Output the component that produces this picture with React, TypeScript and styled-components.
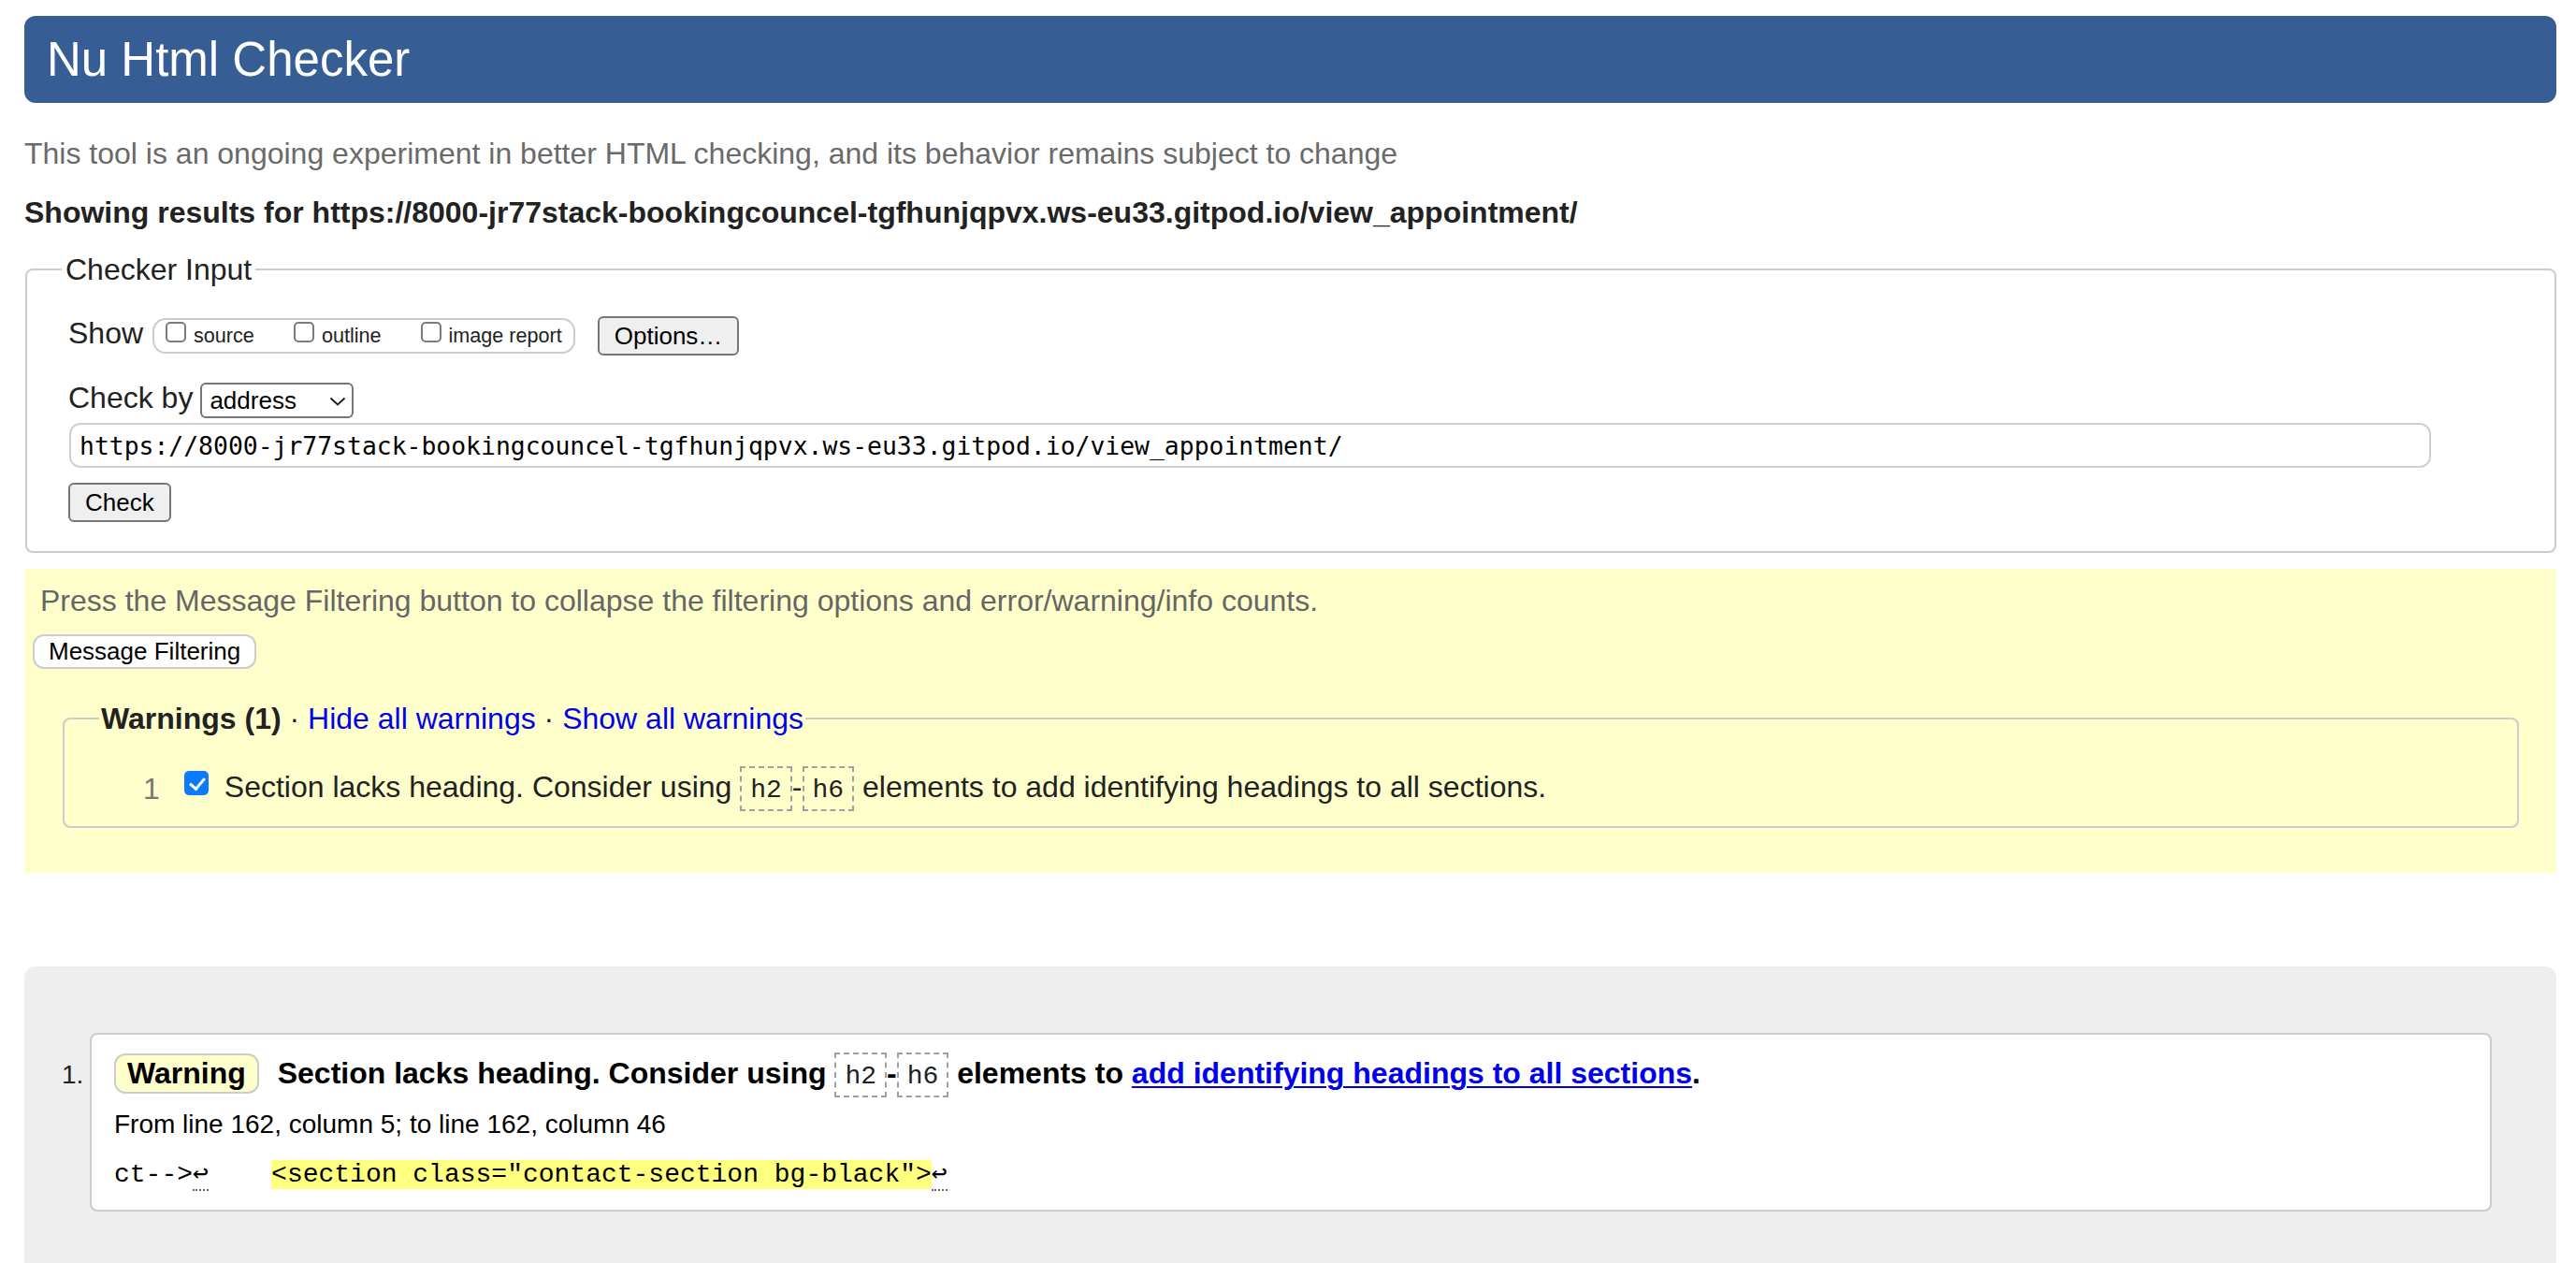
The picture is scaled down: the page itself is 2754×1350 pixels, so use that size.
import styled, { createGlobalStyle } from 'styled-components';

const SANS = '"Liberation Sans", Arial, Helvetica, sans-serif';
const MONO = '"Liberation Mono", "Courier New", monospace';

const checkUrl = 'https://8000-jr77stack-bookingcouncel-tgfhunjqpvx.ws-eu33.gitpod.io/view_appointment/';

const messages = [
  {
    type: 'Warning',
    from: 'From line 162, column 5; to line 162, column 46',
    before: 'ct-->',
    gap: '    ',
    extract: '<section class="contact-section bg-black">',
  },
];

const GlobalStyle = createGlobalStyle`
  html, body {
    margin: 0;
    background: #fff;
  }
  body {
    font-family: ${SANS};
    font-size: 32px;
    color: #222;
  }
  * {
    box-sizing: border-box;
  }
`;

const Page = styled.div`
  padding: 17px 21px 0 26px;
`;

const Header = styled.h1`
  margin: 0;
  height: 93px;
  display: flex;
  align-items: center;
  padding: 0 24px;
  background: #365d94;
  color: #fff;
  border-radius: 12px;
  font-size: 51px;
  font-weight: normal;
`;

const Intro = styled.p`
  margin: 35px 0 0;
  font-size: 32px;
  line-height: 38px;
  color: #6a6a6a;
`;

const ResultTitle = styled.h2`
  margin: 25px 0 0;
  font-size: 32px;
  line-height: 38px;
  font-weight: bold;
  color: #222;
`;

const Fieldset = styled.fieldset`
  margin: 23px 0 0 1px;
  min-inline-size: 0;
  border: 2px solid #cccccc;
  border-radius: 8px;
  padding: 0 0 31px 44px;
`;

const Legend = styled.legend`
  margin-left: -7px;
  padding: 0 4px;
  font-size: 32px;
  line-height: 38px;
  color: #222;
`;

const FormRow = styled.div<{ $top: number }>`
  display: flex;
  align-items: center;
  margin-top: ${(p) => p.$top}px;
`;

const FieldLabel = styled.span`
  font-size: 32px;
  line-height: 36px;
  margin: 0 8px 6px 0;
`;

const ShowGroup = styled.div`
  display: flex;
  align-items: center;
  gap: 42px;
  height: 38px;
  margin-left: 2px;
  padding: 0 12px;
  border: 2px solid #cccccc;
  border-radius: 14px;
`;

const ShowOption = styled.label`
  display: flex;
  align-items: center;
  font-size: 21.6px;
  line-height: 26px;
  color: #222;
`;

const Checkbox = styled.input.attrs({ type: 'checkbox' })<{ $size: number }>`
  appearance: none;
  position: relative;
  flex: none;
  margin: 0;
  width: ${(p) => p.$size}px;
  height: ${(p) => p.$size}px;
  border: 2px solid #7b7b7b;
  border-radius: 5px;
  background: #fff;

  &:checked {
    background: #0b7bfb;
    border-color: #0b7bfb;
  }

  &:checked::after {
    content: '';
    position: absolute;
    left: 7px;
    top: 2px;
    width: 7px;
    height: 13px;
    border: solid #fff;
    border-width: 0 3.5px 3.5px 0;
    transform: rotate(40deg);
  }
`;

const OptionBox = styled(Checkbox)`
  margin: 0 8px 8px 0;
`;

const Button = styled.button<{ $pill?: boolean }>`
  display: inline-flex;
  align-items: center;
  height: ${(p) => (p.$pill ? 37 : 42)}px;
  padding: 0 ${(p) => (p.$pill ? 15 : 16)}px;
  font-family: ${SANS};
  font-size: 26px;
  color: #000;
  background: ${(p) => (p.$pill ? '#fff' : '#efefef')};
  border: 2px solid ${(p) => (p.$pill ? '#cccccc' : '#767676')};
  border-radius: ${(p) => (p.$pill ? 12 : 6)}px;
`;

const OptionsButton = styled(Button)`
  margin-left: 24px;
`;

const SelectWrap = styled.span`
  position: relative;
  display: inline-flex;
`;

const Select = styled.select`
  appearance: none;
  width: 164px;
  height: 38px;
  padding: 0 0 0 8px;
  font-family: ${SANS};
  font-size: 26px;
  color: #000;
  background: #fff;
  border: 2px solid #767676;
  border-radius: 6px;
`;

const Chevron = styled.svg`
  position: absolute;
  right: 8px;
  top: 15px;
  pointer-events: none;
`;

const UrlInput = styled.input`
  display: block;
  width: 2525px;
  height: 48px;
  margin: 3px 0 0 1px;
  padding: 0 9px;
  font-family: "DejaVu Sans Mono", Menlo, monospace;
  font-size: 26.4px;
  color: #000;
  border: 2px solid #cfcfcf;
  border-radius: 12px;
  outline: none;
`;

const CheckButton = styled(Button)`
  margin-top: 16px;
`;

const FilterPanel = styled.section`
  margin-top: 17px;
  padding: 15px 40px 48px 9px;
  background: #ffffcc;
`;

const FilterNote = styled.p`
  margin: 0 0 15px 8px;
  font-size: 32px;
  line-height: 38px;
  color: #666;
`;

const WarningsFieldset = styled.fieldset`
  margin: 34px 0 0 32px;
  min-inline-size: 0;
  border: 2px solid #cccccc;
  border-radius: 8px;
  padding: 0 0 16px 84px;
`;

const WarningsLegend = styled.legend`
  margin-left: -47px;
  padding: 0 2px;
  font-size: 32px;
  line-height: 38px;
  color: #222;

  strong {
    color: #222;
  }
`;

const Link = styled.a<{ $underline?: boolean }>`
  color: #0000ee;
  text-decoration: ${(p) => (p.$underline ? 'underline' : 'none')};
  text-decoration-thickness: 2px;
  text-underline-offset: 3px;
`;

const WarningRow = styled.div`
  display: flex;
  align-items: center;
  height: 48px;
  margin-top: 32px;
  font-size: 32px;
  line-height: 38px;
`;

const RowNumber = styled.span`
  color: #777;
  margin-right: 26px;
`;

const RowCheck = styled(Checkbox)`
  margin-bottom: 12px;
`;

const RowText = styled.span`
  margin-left: 17px;
  color: #222;
`;

const Code = styled.code`
  font-family: ${MONO};
  font-size: 28px;
  font-weight: normal;
  color: #222;
  padding: 8px 9px 5px;
  border: 2px dashed #a0a0a0;
`;

const ResultsPanel = styled.section`
  margin-top: 100px;
  padding: 71px 69px 120px 40px;
  background: #eeeeee;
  border-radius: 12px 12px 0 0;
`;

const ResultList = styled.ol`
  margin: 0;
  padding: 0;
  list-style: none;
`;

const ResultItem = styled.li`
  display: flex;
  align-items: baseline;
`;

const ItemMarker = styled.span`
  flex: none;
  width: 30px;
  font-size: 28px;
  color: #222;
`;

const MessageCard = styled.div`
  flex: 1;
  padding: 17px 24px 20px;
  background: #fff;
  border: 2px solid #cccccc;
  border-radius: 8px;
`;

const MessageHeading = styled.p`
  margin: 0;
  font-size: 32px;
  line-height: 49px;
  font-weight: bold;
  color: #000;
`;

const Badge = styled.span`
  display: inline-block;
  margin-right: 11px;
  padding: 1px 12px;
  line-height: 37px;
  background: #ffffcc;
  border: 2px solid #cccccc;
  border-radius: 12px;
`;

const Location = styled.p`
  margin: 10px 0 0;
  font-size: 28px;
  line-height: 34px;
  color: #000;
`;

const Extract = styled.p`
  margin: 20px 0 0;
  font-family: ${MONO};
  font-size: 28px;
  line-height: 34px;
  color: #000;
  white-space: pre;
`;

const Highlight = styled.mark`
  background: #ffff80;
  color: inherit;
`;

const BreakMark = styled.span`
  border-bottom: 2px dotted #666;
`;

const HeadingText = () => (
  <>
    Section lacks heading. Consider using <Code>h2</Code>-<Code>h6</Code> elements to
  </>
);

export default function App() {
  return (
    <>
      <GlobalStyle />
      <Page>
        <Header>Nu Html Checker</Header>
        <Intro>This tool is an ongoing experiment in better HTML checking, and its behavior remains subject to change</Intro>
        <ResultTitle>Showing results for {checkUrl}</ResultTitle>

        <Fieldset>
          <Legend>Checker Input</Legend>
          <FormRow $top={31}>
            <FieldLabel>Show</FieldLabel>
            <ShowGroup>
              <ShowOption>
                <OptionBox $size={22} />
                source
              </ShowOption>
              <ShowOption>
                <OptionBox $size={22} />
                outline
              </ShowOption>
              <ShowOption>
                <OptionBox $size={22} />
                image report
              </ShowOption>
            </ShowGroup>
            <OptionsButton type="button">Options…</OptionsButton>
          </FormRow>
          <FormRow $top={27}>
            <FieldLabel>Check by</FieldLabel>
            <SelectWrap>
              <Select defaultValue="address">
                <option value="address">address</option>
                <option value="upload">file upload</option>
                <option value="text">text input</option>
              </Select>
              <Chevron width="18" height="10" viewBox="0 0 18 10">
                <polyline points="1.5,1.5 9,8.5 16.5,1.5" fill="none" stroke="#222" strokeWidth="2" />
              </Chevron>
            </SelectWrap>
          </FormRow>
          <UrlInput readOnly value={checkUrl} />
          <CheckButton type="button">Check</CheckButton>
        </Fieldset>

        <FilterPanel>
          <FilterNote>
            Press the Message Filtering button to collapse the filtering options and error/warning/info counts.
          </FilterNote>
          <Button $pill type="button">Message Filtering</Button>
          <WarningsFieldset>
            <WarningsLegend>
              <strong>Warnings (1)</strong> · <Link href="#">Hide all warnings</Link> ·{' '}
              <Link href="#">Show all warnings</Link>
            </WarningsLegend>
            <WarningRow>
              <RowNumber>1</RowNumber>
              <RowCheck $size={26} defaultChecked />
              <RowText>
                <HeadingText /> add identifying headings to all sections.
              </RowText>
            </WarningRow>
          </WarningsFieldset>
        </FilterPanel>

        <ResultsPanel>
          <ResultList>
            {messages.map((m, i) => (
              <ResultItem key={i}>
                <ItemMarker>{i + 1}.</ItemMarker>
                <MessageCard>
                  <MessageHeading>
                    <Badge>{m.type}</Badge> <HeadingText />{' '}
                    <Link href="#" $underline>
                      add identifying headings to all sections
                    </Link>
                    .
                  </MessageHeading>
                  <Location>{m.from}</Location>
                  <Extract>
                    {m.before}
                    <BreakMark>↩</BreakMark>
                    {m.gap}
                    <Highlight>{m.extract}</Highlight>
                    <BreakMark>↩</BreakMark>
                  </Extract>
                </MessageCard>
              </ResultItem>
            ))}
          </ResultList>
        </ResultsPanel>
      </Page>
    </>
  );
}
